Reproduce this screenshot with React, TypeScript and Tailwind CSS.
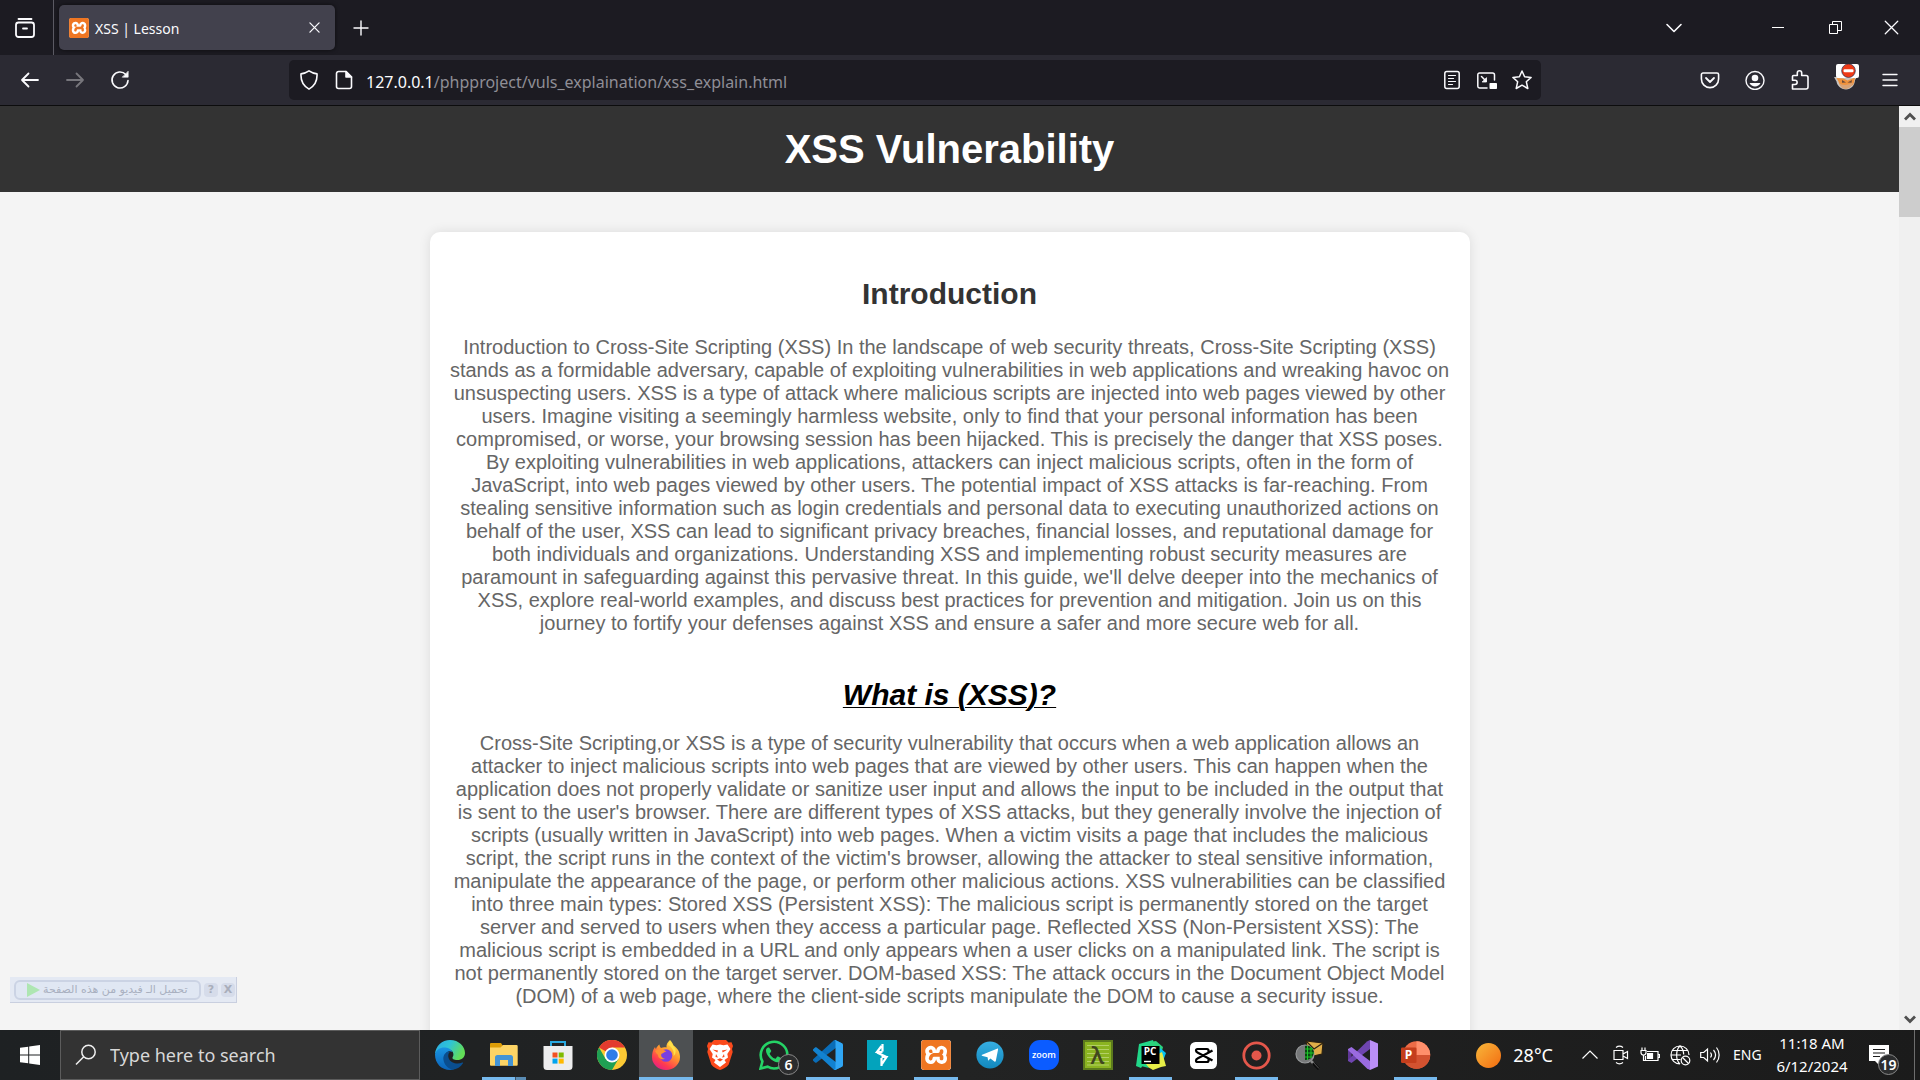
import React from "react";
import { SiXampp } from "react-icons/si";

/* ---------- Browser chrome icons ---------- */

const line = { fill: "none", stroke: "#fbfbfe", strokeWidth: 1.6, strokeLinecap: "round", strokeLinejoin: "round" } as const;

const FirefoxView = () => (
  <svg width="20" height="20" viewBox="0 0 20 20" {...line} strokeWidth={1.8}>
    <path d="M3.500 1h13" />
    <rect x="1" y="4.500" width="18" height="14.500" rx="2.500" />
    <path d="M8 10.500h4" />
  </svg>
);
const Close = ({ size = 11, w = 1.4 }: { size?: number; w?: number }) => (
  <svg width={size} height={size} viewBox="0 0 12 12" {...line} strokeWidth={w}>
    <path d="M1 1l10 10M11 1L1 11" />
  </svg>
);
const Plus = () => (
  <svg width="16" height="16" viewBox="0 0 16 16" {...line} strokeWidth={1.4}>
    <path d="M8 1v14M1 8h14" />
  </svg>
);
const Arrow = ({ forward = false }: { forward?: boolean }) => (
  <svg width="20" height="20" viewBox="0 0 20 20" {...line} stroke={forward ? "#77767c" : "#fbfbfe"} strokeWidth={1.8}>
    {forward ? <path d="M2 10h16M11.500 3.500L18 10l-6.500 6.500" /> : <path d="M18 10H2M8.500 3.500L2 10l6.500 6.500" />}
  </svg>
);
const Reload = () => (
  <svg width="20" height="20" viewBox="0 0 20 20" {...line}>
    <path d="M18 10.500A8 8 0 1 1 15.800 4.500" />
    <path d="M18.200 1.500v5.700h-5.700z" fill="#fbfbfe" strokeWidth={0.6} />
  </svg>
);
const Shield = () => (
  <svg width="20" height="20" viewBox="0 0 20 20" {...line}>
    <path d="M10 .9c2.400 1.700 5 2.600 8 3 .4 6.600-1.700 11.800-8 15.200C3.700 15.700 1.600 10.500 2 3.900c3-.4 5.600-1.300 8-3z" />
  </svg>
);
const PageIcon = () => (
  <svg width="20" height="20" viewBox="0 0 20 20" {...line}>
    <path d="M4.500 1.500H12l5.500 5.500v9.500a2 2 0 0 1-2 2h-11a2 2 0 0 1-2-2v-13a2 2 0 0 1 2-2z" />
    <path d="M12 1.500V7h5.500z" fill="#fbfbfe" />
  </svg>
);
const Reader = () => (
  <svg width="20" height="20" viewBox="0 0 20 20" {...line} strokeWidth={1.5}>
    <rect x="2.800" y="1.500" width="14.400" height="17" rx="2" />
    <path d="M6.500 5.500h7M6.500 8.500h5M6.500 11.500h7M6.500 14.500h4" strokeWidth={1.2} />
  </svg>
);
const Pip = () => (
  <svg width="20" height="20" viewBox="0 0 20 20" {...line} strokeWidth={1.5}>
    <path d="M17.500 10V5a2 2 0 0 0-2-2h-13a1.700 1.700 0 0 0-1.700 1.700v11.600A1.700 1.700 0 0 0 2.500 18H10" />
    <path d="M4.500 6.500L9 11" />
    <path d="M9.500 8v4h-4z" fill="#fbfbfe" strokeWidth={0.8} />
    <rect x="12.500" y="13" width="7.500" height="6" rx=".8" fill="#fff" stroke="none" />
  </svg>
);
const Star = () => (
  <svg width="20" height="20" viewBox="0 0 20 20" {...line} strokeWidth={1.5}>
    <path d="M10 1l2.600 5.700 6.500.7-4.800 4.300 1.500 6.800L10 15.200l-5.800 3.300 1.500-6.800L.9 7.400l6.500-.7z" />
  </svg>
);
const Pocket = () => (
  <svg width="20" height="20" viewBox="0 0 20 20" {...line}>
    <path d="M3 3h14a1.600 1.600 0 0 1 1.600 1.600V9a8.600 8.600 0 0 1-17.200 0V4.600A1.600 1.600 0 0 1 3 3z" />
    <path d="M6 8l4 4 4-4" strokeWidth={1.8} />
  </svg>
);
const Account = () => (
  <svg width="20" height="20" viewBox="0 0 20 20" {...line} strokeWidth={1.4}>
    <circle cx="10" cy="10.500" r="9" />
    <circle cx="10" cy="8" r="3.300" fill="#fbfbfe" stroke="none" />
    <path d="M4.500 13h11c-1 2.300-3.200 3.500-5.500 3.500S5.500 15.300 4.500 13z" fill="#fbfbfe" stroke="none" />
  </svg>
);
const Extension = () => (
  <svg width="20" height="20" viewBox="0 0 20 20" {...line}>
    <path d="M3.500 5.500h3.800V3a2.200 2.200 0 0 1 4.400 0v2.500H16a2 2 0 0 1 2 2V17a2 2 0 0 1-2 2H2.500v-4.500H5a2 2 0 0 0 0-4.300H2.500V6.500a1 1 0 0 1 1-1z" />
  </svg>
);
const FoxExtension = () => (
  <svg width="26" height="26" viewBox="0 0 26 26">
    <path d="M0 13h23l-2 3c0 5-4 9.500-9 9.500S3 21.500 2.500 17.500z" fill="#c9c4bf" />
    <path d="M2.500 14l7 .5 4 2 7.500-3-1 5c-1 3.500-4 4.500-8 4.500-4.500 0-7-2.500-7.500-5.500z" fill="#f0923d" />
    <path d="M5 19.500c4 2 9 2 14-1-1 4-4 6.500-7.500 6.500-3 0-5.500-2-6.500-5.500z" fill="#d9a377" />
    <path d="M8 16l4 2.500-4 .3zM18 16l-4.500 2.500 4 .3z" fill="#6b4a3a" />
    <rect x="2" y="0" width="23" height="14" rx="2" fill="#fff" />
    <circle cx="14.500" cy="6.700" r="6.800" fill="#ee3a17" stroke="#20264a" strokeWidth=".7" />
    <rect x="9.500" y="5.300" width="10" height="3" rx="1.300" fill="#fff" />
  </svg>
);
const Menu = () => (
  <svg width="20" height="20" viewBox="0 0 20 20" {...line} strokeWidth={1.4}>
    <path d="M3 4.500h14M3 10h14M3 15.500h14" />
  </svg>
);
const XamppIcon = ({ size }: { size: number }) => (
  <span className="grid place-items-center rounded-[3px] bg-white text-[#ef7622]">
    <SiXampp size={size} />
  </span>
);

/* ---------- Taskbar icons ---------- */

const Edge = () => (
  <svg width="30" height="30" viewBox="0 0 30 30">
    <defs>
      <linearGradient id="ed1" x1="0" y1="0" x2="1" y2=".4">
        <stop offset="0" stopColor="#2aa9e6" />
        <stop offset=".5" stopColor="#2fc4d6" />
        <stop offset="1" stopColor="#62dd57" />
      </linearGradient>
      <linearGradient id="ed2" x1="0" y1="0" x2="0" y2="1">
        <stop offset="0" stopColor="#1a94e2" />
        <stop offset="1" stopColor="#0b63b8" />
      </linearGradient>
    </defs>
    <path d="M0 14C.6 6 7 0 15 0c9 0 15 6.500 15 13 0 4.500-3.500 7-7.500 7-4 0-5.500-1.600-5-2.600 1.500-1.800 1.200-5-.7-6.600C12.500 7.400 4 8 0 14z" fill="url(#ed1)" />
    <path d="M0 14.500C1 9.500 6 7 10.500 7.600c3.500.4 6 2 7 4.400-4-2-7.500.5-7.500 5 0 6 5 10.500 11 11-1.800 1.300-4 2-6 2C6.500 30 0 23.500 0 14.500z" fill="url(#ed2)" />
    <path d="M12.500 11.700c-3 1.500-4.700 4.500-4 8.300.8 4.500 4 8.500 9 9.700 4.500-.5 8.300-3 10.500-6.500.4-.7-.2-1-.7-.7-5 2.500-11.500.5-13.500-4-1-2.500-.7-5 1-6.500-.7-.5-1.500-.6-2.300-.3z" fill="#0a4e8f" />
  </svg>
);
const Explorer = () => (
  <svg width="30" height="30" viewBox="0 0 30 30">
    <path d="M1 4a1 1 0 0 1 1-1h10l2 3v4H1z" fill="#dd9d07" />
    <path d="M1 7.500h10.500L14 5h13.500a1.200 1.200 0 0 1 1.200 1.200v18.600a1 1 0 0 1-1 1H2a1 1 0 0 1-1-1z" fill="#fdd465" />
    <path d="M6 26V17.500A2.500 2.500 0 0 1 8.500 15h13a2.500 2.500 0 0 1 2.500 2.500V26h-5v-6h-8v6z" fill="#4494d5" />
  </svg>
);
const Store = () => (
  <svg width="30" height="30" viewBox="0 0 30 30">
    <path d="M8 7V2h14v5" fill="none" stroke="#29a8e0" strokeWidth="2" />
    <path d="M.5 6h29v20.500a3.500 3.500 0 0 1-3.500 3.500H4A3.500 3.500 0 0 1 .5 26.500z" fill="#ededee" />
    <path d="M9.500 12.500h5v5h-5z" fill="#f25022" />
    <path d="M15.700 12.500h5v5h-5z" fill="#7fba00" />
    <path d="M9.500 18.600h5v5h-5z" fill="#00a4ef" />
    <path d="M15.700 18.600h5v5h-5z" fill="#ffb900" />
  </svg>
);
const Chrome = () => (
  <svg width="30" height="30" viewBox="0 0 30 30">
    <circle cx="15" cy="15" r="15" fill="#fcc934" />
    <path d="M15 15L2 7.500A15 15 0 0 1 28 7.500H15z" fill="#e33b2e" />
    <path d="M2 7.500A15 15 0 0 0 15 30l6.500-11.200L15 15 8.500 18.700z" fill="#1fa053" />
    <circle cx="15" cy="15" r="7.500" fill="#fff" />
    <circle cx="15" cy="15" r="5.800" fill="#2f7de9" />
  </svg>
);
const Firefox = () => (
  <svg width="30" height="30" viewBox="0 0 30 30">
    <defs>
      <linearGradient id="ff1" x1=".8" y1="0" x2=".2" y2="1">
        <stop offset="0" stopColor="#fff04a" />
        <stop offset=".4" stopColor="#ff9a2e" />
        <stop offset=".75" stopColor="#ff3b4f" />
        <stop offset="1" stopColor="#e01b8c" />
      </linearGradient>
    </defs>
    <path d="M19 0c2 2 3 4 3.500 5.500C26.500 8 29 12 29 17a14 13 0 0 1-28 0c0-3.500.8-7 3-10 .2 1 .5 1.500 1 2 .6-2 2-3.500 3.500-4.500 0 1.500.5 2.500 1.500 3.500 2-1 4-1 5.500-.5C15 5 16.500 2 19 0z" fill="url(#ff1)" />
    <circle cx="15" cy="15.500" r="6.300" fill="#7b3fe0" />
    <path d="M4 11c3-2.500 7-2.500 11.500.5-2 .3-3 1.500-5 2.300-1 1.500 0 4.500 3.500 5-3 1.500-7-.3-7-4-1-.5-2-2-3-3.800z" fill="#ff9232" />
    <path d="M17 5c4 2 6.500 6 5.500 11 2-1.500 2.500-4 2-6.500-1-3-3.500-5-5.500-8-1 1-1.700 2.200-2 3.500z" fill="#ffe04a" />
  </svg>
);
const Brave = () => (
  <svg width="26" height="30" viewBox="0 0 26 30">
    <path d="M7 0h12l2.500 2.500 3-.3L26 6l-1 3 .7 3-4 12.500c-2 3-6 4.500-8.700 5.500-2.700-1-6.700-2.500-8.700-5.500L.3 12 1 9 0 6l1.500-3.800 3 .3z" fill="#fb4a1c" />
    <path d="M5.500 4.500l4 .8L13 4.500l3.500.8 4-.8L23.500 9l-3.200 5 .7 3.500-3.500 2.500 1.500 2.500L13 27l-6-4.500L8.500 20 5 17.500l.7-3.500L2.500 9z" fill="#fff" />
    <path d="M5.500 9.500l5.500 1-.7 2zM20.500 9.500l-5.500 1 .7 2zM9 14l2 3.500-2.500-.5zM17 14l-2 3.500 2.500-.5zM10 19.500l3-1.200 3 1.200-3 2z" fill="#fb4a1c" />
  </svg>
);
const Badge = ({ children, className }: { children: React.ReactNode; className: string }) => (
  <span className={`absolute grid size-[21px] place-items-center rounded-full border border-[#8a8a8a] bg-[#2c2d2e] text-sm leading-none font-semibold text-white ${className}`}>
    {children}
  </span>
);
const Whatsapp = () => (
  <span className="relative block">
    <svg width="30" height="30" viewBox="0 0 30 30">
      <path d="M1.500 28.500l1.900-7A13.300 13.300 0 1 1 8.600 26.700z" fill="none" stroke="#25d366" strokeWidth="2.600" />
      <path d="M10.600 8.200c-.4-.8-.8-.8-1.300-.8-1 0-2.600 1.200-2.300 3.700.5 4.300 5.700 10.300 11 11.200 2.500.4 4.300-1 4.600-3.200.1-.7 0-.9-.5-1.200l-2.900-1.400c-.5-.2-.8-.1-1.100.3l-1.300 1.600c-.3.3-.6.400-1 .2-2-.9-3.900-2.600-5-4.700-.2-.4-.1-.7.2-1l1-1.200c.3-.4.300-.7.100-1.100z" fill="#25d366" />
    </svg>
    <Badge className="-right-[10px] -bottom-[5px]">6</Badge>
  </span>
);
const VsCode = () => (
  <svg width="30" height="30" viewBox="0 0 100 100">
    <path d="M96.460 10.800L75.860.880C73.470-.270 70.600.210 68.750 2.080L1.300 63.580c-1.800 1.620-1.800 4.520 0 6.220l5.500 5c1.500 1.300 3.700 1.400 5.300.2L93.360 13.370C96.100 11.300 100 13.200 100 16.600c0-2.600-1.400-4.800-3.540-5.800z" fill="#0a6db8" />
    <path d="M96.460 89.200l-20.600 9.920c-2.390 1.150-5.260.67-7.110-1.200L1.300 36.420c-1.800-1.620-1.800-4.520 0-6.220l5.500-5c1.500-1.300 3.700-1.400 5.300-.2l81.260 61.630C96.100 88.700 100 86.800 100 83.400c0 2.600-1.400 4.800-3.540 5.800z" fill="#1282d0" />
    <path d="M75.860 99.130c-2.390 1.140-5.260.660-7.110-1.210C71.060 100.200 75 98.600 75 95.300V4.700c0-3.300-3.940-4.900-6.250-2.620C70.600.200 73.470-.270 75.860.870l20.590 9.900C98.600 11.800 100 14 100 16.400v67.200c0 2.400-1.400 4.600-3.550 5.600z" fill="#30a6f4" />
  </svg>
);
const Burp = () => (
  <svg width="30" height="30" viewBox="0 0 30 30">
    <path d="M0 0h30v30H0z" fill="#03a3bc" />
    <path d="M15.500 4v7.500M15.500 12H10l4.500-6M10 12.500l9.500 4.500M14.500 17h5L15 24M14.500 18v8" fill="none" stroke="#fff" strokeWidth="2.200" />
  </svg>
);
const Telegram = () => (
  <svg width="28" height="28" viewBox="0 0 28 28">
    <defs>
      <linearGradient id="tg" x1="0" y1="0" x2="0" y2="1">
        <stop offset="0" stopColor="#36aee2" />
        <stop offset="1" stopColor="#1288bd" />
      </linearGradient>
    </defs>
    <circle cx="14" cy="14" r="13.600" fill="url(#tg)" />
    <path d="M5.500 14L21 7.700c.7-.3 1.200.2 1 1.100L19.800 20c-.2.800-.8 1-1.400.6l-4-3-2.300 2.200-.5-3.600-5-1.200c-.8-.3-.8-.7-1.100-1z" fill="#fff" />
  </svg>
);
const Zoom = () => (
  <span className="grid size-[30px] place-items-center rounded-[11px] bg-[#0b5cff]">
    <span className="pb-0.5 font-['Open_Sans'] text-[9px] leading-none font-semibold text-white">zoom</span>
  </span>
);
const Lambda = () => (
  <span className="relative grid size-[30px] place-items-center border-2 border-[#5c7a1d] bg-[#8bb421]">
    <svg width="26" height="26" viewBox="0 0 26 26" className="absolute inset-0">
      <path d="M2 3.500h22M2 7.500h22M2 11.500h22M2 15.500h22M2 19.500h22M2 23h22" stroke="#b3d066" strokeWidth="1" />
    </svg>
    <span className="relative font-['Open_Sans'] text-2xl leading-6 font-semibold text-[#40461f]">λ</span>
  </span>
);
const PyCharm = () => (
  <span className="relative grid size-[30px] place-items-center">
    <svg width="30" height="30" viewBox="0 0 30 30" className="absolute inset-0">
      <path d="M3 4L17 0l2 8L5 28l-5-2z" fill="#21d789" />
      <path d="M14 2l6-1 7 6-2 8H12z" fill="#2bd37c" />
      <path d="M24 8l6 5-3 8-5-5z" fill="#07c3f2" />
      <path d="M5 23L26 12l4 14-5 1-8 3z" fill="#e6ee47" />
      <path d="M1 25l6-5 6 8z" fill="#21d789" />
      <path d="M5.500 6h18v18h-18z" fill="#000" />
      <path d="M8 21.500h7" stroke="#fff" strokeWidth="1.400" />
    </svg>
    <span className="relative pr-px pb-2 font-['Open_Sans'] text-[10px] leading-none font-bold text-white">PC</span>
  </span>
);
const CapCut = () => (
  <svg width="27" height="27" viewBox="0 0 27 27">
    <rect width="27" height="27" rx="5.500" fill="#fff" />
    <path d="M22.500 8.500L7.500 16.500c-1 .5-1.500 1-1.500 2s.6 1.500 1.500 1.500H17c1 0 1.500-.7 1.500-1.500V17M22.500 18.500L7.500 10.500C6.500 10 6 9.500 6 8.500S6.600 7 7.500 7H17c1 0 1.500.7 1.500 1.500V10" fill="none" stroke="#000" strokeWidth="2.200" />
  </svg>
);
const Recorder = () => (
  <svg width="29" height="29" viewBox="0 0 29 29">
    <circle cx="14.500" cy="14.500" r="12.700" fill="none" stroke="#e4574b" strokeWidth="2.800" />
    <circle cx="14.500" cy="14.500" r="5" fill="#e4574b" />
  </svg>
);
const MailSearch = () => (
  <svg width="30" height="30" viewBox="0 0 30 30">
    <path d="M11 1l17 2-1 11-13 3z" fill="#e0ae49" stroke="#2b2112" strokeWidth="1.200" />
    <path d="M11 1l8 8 9-6" fill="none" stroke="#2b2112" strokeWidth="1.200" />
    <circle cx="10" cy="14" r="9" fill="#77797a" stroke="#97999a" strokeWidth="1.200" />
    <path d="M10 6c5-1 8 2 9 6-.5 5-4 8-9 8z" fill="#0b4511" />
    <path d="M12.500 6v14M16 7v11M10 9h8M10 13h9M10 17h7" stroke="#1fc62a" strokeWidth="1" />
    <path d="M16 21l3 3" stroke="#8a8a8a" strokeWidth="2.500" />
    <path d="M18 23l6 6" stroke="#0b0b0b" strokeWidth="3" />
    <path d="M18 22l6 6.500" stroke="#6a6a6a" strokeWidth=".8" />
  </svg>
);
const VisualStudio = () => (
  <svg width="30" height="30" viewBox="0 0 30 30">
    <path d="M0 9l3.500 3v6L0 21z" fill="#5f3796" />
    <path d="M3.500 23L0 21v-1L19 1.500 22 0v9z" fill="#6f45b0" />
    <path d="M3.500 7L0 9v1l19 18.500 3 1.500v-9z" fill="#9a6be0" />
    <path d="M22 0l8 3.500v23L22 30z" fill="#bb8ff7" />
  </svg>
);
const PowerPoint = () => (
  <span className="relative block">
    <svg width="30" height="30" viewBox="0 0 30 30">
      <circle cx="15.500" cy="15" r="13.700" fill="#ed6c47" />
      <path d="M15.500 1.300A13.700 13.700 0 0 1 29.200 15H15.500z" fill="#ff8f6b" />
      <path d="M1.800 15h27.400a13.700 13.700 0 0 1-27.400 0z" fill="#d35230" />
      <rect x="0" y="7.500" width="15.500" height="15.500" rx="1.300" fill="#c43e1c" />
    </svg>
    <span className="absolute top-[7px] left-0 grid size-4 place-items-center font-['Open_Sans'] text-xs leading-none font-bold text-white">P</span>
  </span>
);

type Task = { name: string; icon: React.ReactNode; state?: "open" | "active" | "stacked" };

const pinned: Task[] = [
  { name: "Edge", icon: <Edge /> },
  { name: "File Explorer", icon: <Explorer />, state: "stacked" },
  { name: "Store", icon: <Store /> },
  { name: "Chrome", icon: <Chrome /> },
  { name: "Firefox", icon: <Firefox />, state: "active" },
  { name: "Brave", icon: <Brave /> },
  { name: "WhatsApp", icon: <Whatsapp /> },
  { name: "Visual Studio Code", icon: <VsCode />, state: "open" },
  { name: "Burp Suite", icon: <Burp /> },
  { name: "XAMPP", icon: <XamppIcon size={30} />, state: "open" },
  { name: "Telegram", icon: <Telegram /> },
  { name: "Zoom", icon: <Zoom /> },
];
const running: Task[] = [
  { name: "Lambda", icon: <Lambda /> },
  { name: "PyCharm", icon: <PyCharm />, state: "open" },
  { name: "CapCut", icon: <CapCut /> },
  { name: "Recorder", icon: <Recorder />, state: "open" },
  { name: "Mail Search", icon: <MailSearch /> },
  { name: "Visual Studio", icon: <VisualStudio /> },
  { name: "PowerPoint", icon: <PowerPoint />, state: "open" },
];

const TaskButton = ({ task, wide }: { task: Task; wide: boolean }) => (
  <button
    aria-label={task.name}
    className={`relative grid h-full shrink-0 place-items-center ${wide ? "w-[54px]" : "w-[53px]"} ${task.state === "active" ? "bg-[#4d5052]" : ""}`}
  >
    {task.icon}
    {task.state === "active" && <span className="absolute inset-x-0 bottom-0 h-[3px] bg-[#76b9ed]" />}
    {task.state === "open" && <span className="absolute inset-x-[5px] bottom-0 h-[3px] bg-[#76b9ed]" />}
    {task.state === "stacked" && (
      <span className="absolute inset-x-[5px] bottom-0 flex h-[3px]">
        <span className="flex-1 bg-[#76b9ed]" />
        <span className="w-[11px] border-l border-[#3d5266] bg-[#5a8cb4]" />
      </span>
    )}
  </button>
);

const ToolButton = ({ label, children, narrow = false }: { label: string; children: React.ReactNode; narrow?: boolean }) => (
  <button aria-label={label} className={`grid h-10 shrink-0 place-items-center ${narrow ? "w-[35px]" : "w-[45px]"}`}>
    {children}
  </button>
);

const Chevron = ({ up = false }: { up?: boolean }) => (
  <svg width="12" height="9" viewBox="0 0 12 9">
    <path d={up ? "M1 7.500L6 2.500l5 5" : "M1 1.500l5 5 5-5"} fill="none" stroke="#505050" strokeWidth="2.800" />
  </svg>
);

/* ---------- Sections ---------- */

const TabStrip = () => (
  <div className="flex h-[55px] shrink-0 items-center bg-[#1c1b22]">
    <button aria-label="Firefox View" className="grid h-full w-[54px] place-items-center border-r border-[#5b5a63] pr-[3px]">
      <FirefoxView />
    </button>
    <div className="ml-[5px] flex h-[45px] w-[276px] items-center rounded-[5px] bg-[#42414d] pr-[11px] pl-2.5 shadow-[0_0_4px_rgba(0,0,0,0.6)]">
      <XamppIcon size={20} />
      <span className="ml-1.5 flex-1 pt-0.5 text-sm text-[#fbfbfe]">XSS | Lesson</span>
      <button aria-label="Close tab" className="grid size-5 place-items-center">
        <Close />
      </button>
    </div>
    <button aria-label="New tab" className="ml-4 grid size-5 place-items-center">
      <Plus />
    </button>
    <div className="flex-1" />
    <button aria-label="List all tabs" className="grid w-[46px] place-items-center">
      <svg width="18" height="10" viewBox="0 0 18 10" {...line}>
        <path d="M2 1.500l7 7 7-7" />
      </svg>
    </button>
    <div className="ml-[52px] flex">
      <button aria-label="Minimize" className="grid h-[55px] w-[58px] place-items-center">
        <span className="h-px w-3 bg-white" />
      </button>
      <button aria-label="Restore" className="grid h-[55px] w-[56px] place-items-center">
        <svg width="13" height="13" viewBox="0 0 13 13" fill="none" stroke="#fff">
          <path d="M.5 3.500h8v9h-8zM3.500 3.500v-3h9v9h-4" />
        </svg>
      </button>
      <button aria-label="Close" className="grid h-[55px] w-[57px] place-items-center">
        <Close size={15} w={1} />
      </button>
    </div>
  </div>
);

const Toolbar = () => (
  <div className="flex h-[51px] shrink-0 items-center border-b border-[#0c0c0d] bg-[#2b2a33] pr-2 pl-[7px]">
    <ToolButton label="Back"><Arrow /></ToolButton>
    <ToolButton label="Forward"><Arrow forward /></ToolButton>
    <ToolButton label="Reload"><Reload /></ToolButton>
    <div className="mr-[146px] ml-[147px] flex h-10 flex-1 items-center rounded-[5px] bg-[#1c1b22] px-0.5">
      <ToolButton label="Tracking protection" narrow><Shield /></ToolButton>
      <ToolButton label="Site information" narrow><PageIcon /></ToolButton>
      <span className="ml-[5px] flex-1 pt-[3px] text-base text-[#8f8e96]">
        <span className="text-[#fbfbfe]">127.0.0.1</span>/phpproject/vuls_explaination/xss_explain.html
      </span>
      <ToolButton label="Reader view" narrow><Reader /></ToolButton>
      <ToolButton label="Picture in picture" narrow><Pip /></ToolButton>
      <ToolButton label="Bookmark" narrow><Star /></ToolButton>
    </div>
    <ToolButton label="Pocket"><Pocket /></ToolButton>
    <ToolButton label="Account"><Account /></ToolButton>
    <ToolButton label="Extensions"><Extension /></ToolButton>
    <ToolButton label="Wallet"><span className="pb-[7px] pl-1"><FoxExtension /></span></ToolButton>
    <ToolButton label="Menu"><Menu /></ToolButton>
  </div>
);

const DownloadBar = () => (
  <div className="absolute bottom-[27px] left-2.5 flex h-[26px] items-center border-r border-b border-[#c9cfdf] bg-[#e4e9f3] pr-px pl-1 font-['DejaVu_Sans']">
    <button className="flex h-5 w-[187px] items-center rounded-md border-2 border-[#cbd3e4] bg-[#e0e7f3] pl-2.5">
      <svg width="15" height="14" viewBox="0 0 15 14" className="shrink-0">
        <path d="M1 0l13 7-13 7z" fill="#aee6b2" />
      </svg>
      <span dir="rtl" className="ml-0.5 text-[11px] leading-4 whitespace-nowrap text-[#a9b0c0]">تحميل الـ فيديو من هذه الصفحة</span>
    </button>
    <button className="ml-[3px] size-3.5 rounded bg-[#d6dcea] text-[11px] leading-none font-bold text-[#a9aebb]">?</button>
    <button className="ml-[3px] size-3.5 rounded bg-[#d6dcea] text-[11px] leading-none font-bold text-[#a9aebb]">X</button>
  </div>
);

const Page = () => (
  <div className="relative flex min-h-0 flex-1 bg-[#f4f4f4]">
    <main className="min-w-0 flex-1 overflow-hidden text-center font-['Liberation_Sans',Arial,sans-serif]">
      <header className="bg-[#333] py-5">
        <h1 className="text-[40px] leading-[46px] font-bold text-white">XSS Vulnerability</h1>
      </header>
      <article className="mx-auto mt-10 max-w-[1040px] rounded-[10px] bg-white px-5 py-[45px] shadow-[0_0_12px_rgba(0,0,0,0.1)]">
        <h2 className="text-3xl leading-[34px] font-bold text-[#333]">Introduction</h2>
        <p className="mt-[25px] text-xl leading-[23px] text-[#666]">
          Introduction to Cross-Site Scripting (XSS) In the landscape of web security threats, Cross-Site Scripting (XSS)
          stands as a formidable adversary, capable of exploiting vulnerabilities in web applications and wreaking havoc on
          unsuspecting users. XSS is a type of attack where malicious scripts are injected into web pages viewed by other
          users. Imagine visiting a seemingly harmless website, only to find that your personal information has been
          compromised, or worse, your browsing session has been hijacked. This is precisely the danger that XSS poses. By
          exploiting vulnerabilities in web applications, attackers can inject malicious scripts, often in the form of
          JavaScript, into web pages viewed by other users. The potential impact of XSS attacks is far-reaching. From
          stealing sensitive information such as login credentials and personal data to executing unauthorized actions on
          behalf of the user, XSS can lead to significant privacy breaches, financial losses, and reputational damage for
          both individuals and organizations. Understanding XSS and implementing robust security measures are paramount in
          safeguarding against this pervasive threat. In this guide, we'll delve deeper into the mechanics of XSS, explore
          real-world examples, and discuss best practices for prevention and mitigation. Join us on this journey to fortify
          your defenses against XSS and ensure a safer and more secure web for all.
        </p>
        <h2 className="mt-[43px] text-3xl leading-[34px] font-bold text-black italic underline decoration-1 underline-offset-2">What is (XSS)?</h2>
        <p className="mt-5 text-xl leading-[23px] text-[#666]">
          Cross-Site Scripting,or XSS is a type of security vulnerability that occurs when a web application allows an
          attacker to inject malicious scripts into web pages that are viewed by other users. This can happen when the
          application does not properly validate or sanitize user input and allows the input to be included in the output
          that is sent to the user's browser. There are different types of XSS attacks, but they generally involve the
          injection of scripts (usually written in JavaScript) into web pages. When a victim visits a page that includes
          the malicious script, the script runs in the context of the victim's browser, allowing the attacker to steal
          sensitive information, manipulate the appearance of the page, or perform other malicious actions. XSS
          vulnerabilities can be classified into three main types: Stored XSS (Persistent XSS): The malicious script is
          permanently stored on the target server and served to users when they access a particular page. Reflected XSS
          (Non-Persistent XSS): The malicious script is embedded in a URL and only appears when a user clicks on a
          manipulated link. The script is not permanently stored on the target server. DOM-based XSS: The attack occurs in
          the Document Object Model (DOM) of a web page, where the client-side scripts manipulate the DOM to cause a
          security issue.
        </p>
      </article>
    </main>
    <div className="flex w-[21px] shrink-0 flex-col bg-[#f0f0f0]">
      <button aria-label="Scroll up" className="grid h-[21px] place-items-center"><Chevron up /></button>
      <div className="h-[90px] bg-[#cdcdcd]" />
      <div className="flex-1" />
      <button aria-label="Scroll down" className="grid h-[21px] place-items-center"><Chevron /></button>
    </div>
    <DownloadBar />
  </div>
);

const tray = { fill: "none", stroke: "#fff", strokeWidth: 1.2 } as const;

const Taskbar = () => (
  <footer className="flex h-[50px] shrink-0 items-stretch bg-linear-to-r from-[#1e2123] via-[#222323] to-[#1b1b1b] text-white">
    <button aria-label="Start" className="grid w-[60px] place-items-center">
      <svg width="20" height="20" viewBox="0 0 20 20" fill="#fff">
        <path d="M0 2.800L8.200 1.700v7.800H0zM9.200 1.500L20 0v9.500H9.200zM0 10.500h8.200v7.800L0 17.200zM9.200 10.500H20V20L9.200 18.500z" />
      </svg>
    </button>
    <label className="flex w-[360px] items-center border border-[#5c5c5c] bg-[#333]">
      <svg width="22" height="22" viewBox="0 0 22 22" className="ml-3.5" fill="none" stroke="#f0f0f0" strokeWidth="1.500">
        <circle cx="13.500" cy="8" r="6.700" />
        <path d="M8.700 12.800L1 20.500" />
      </svg>
      <input
        aria-label="Search"
        placeholder="Type here to search"
        className="ml-[13px] min-w-0 flex-1 bg-transparent text-lg text-white outline-none placeholder:text-[#d8d8d8]"
      />
    </label>
    <nav className="ml-[3px] flex">
      {pinned.map((t) => <TaskButton key={t.name} task={t} wide />)}
      {running.map((t) => <TaskButton key={t.name} task={t} wide={false} />)}
    </nav>
    <div className="flex-1" />
    <button className="flex items-center text-lg">
      <span className="mr-3 size-[25px] rounded-full bg-linear-to-br from-[#f6b73a] to-[#f26a0c]" />
      28°C
    </button>
    <div className="ml-[29px] flex items-center">
      <svg width="16" height="10" viewBox="0 0 16 10" {...tray}><path d="M.5 8.500L8 1l7.500 7.500" /></svg>
      <svg width="16" height="20" viewBox="0 0 16 20" {...tray} className="ml-[15px]">
        <path d="M1 5.500h9v9H1zM10 9l4.500-2.500v7L10 11M3 2.500c2-1.500 5-1.500 7 0M3 17.500c2 1.500 5 1.500 7 0" />
      </svg>
      <svg width="20" height="16" viewBox="0 0 20 16" {...tray} className="ml-[11px]">
        <path d="M7 4.500h11v9H5.500V9M18.500 7.500h1v3h-1" />
        <path d="M7.500 6.500h5v5h-5z" fill="#fff" />
        <path d="M1 3.500h5v2a2.500 2.500 0 0 1-5 0zM2 3.500v-3M5 3.500v-3M3.500 8v5.500h2" />
      </svg>
      <svg width="21" height="21" viewBox="0 0 21 21" {...tray} className="ml-2.5">
        <path d="M19 10A9 9 0 1 0 10 19M10 1C5.500 5 5.500 15 10 19M10 1c2.500 2 3.500 5 3.700 8.500M1 10h10M2.500 5.500h15M2.500 14.500h8" />
        <circle cx="15.500" cy="15.500" r="4.300" />
        <path d="M12.500 12.500l6 6" />
      </svg>
      <svg width="20" height="18" viewBox="0 0 20 18" {...tray} className="ml-[9px]">
        <path d="M.7 6.500h3L7.500 3v12L3.700 11.500h-3zM10.500 6.500c1.200 1.500 1.200 3.500 0 5M13.500 4c2.500 3 2.500 7 0 10M16.500 1.500c3.500 4.500 3.500 10.500 0 15" />
      </svg>
      <span className="ml-[13px] w-[30px] text-sm">ENG</span>
      <div className="ml-2.5 w-[78px] text-center text-[15px] leading-[23px] whitespace-nowrap">
        <div>11:18 AM</div>
        <div>6/12/2024</div>
      </div>
      <span className="relative ml-[18px] block">
        <svg width="20" height="20" viewBox="0 0 20 20">
          <path d="M0 0h20v16H10v4l-4-4H0z" fill="#fff" />
          <path d="M4 4.500h12M4 8h12M4 11.500h7" stroke="#1b1b1b" strokeWidth="1.200" />
        </svg>
        <Badge className="-right-[10px] -bottom-[10px]">19</Badge>
      </span>
    </div>
    <button aria-label="Show desktop" className="ml-[25px] w-1.5 border-l border-[#6d6d6d]" />
  </footer>
);

export default function App() {
  return (
    <div className="flex h-screen flex-col overflow-hidden font-['Noto_Sans','Open_Sans',sans-serif]">
      <TabStrip />
      <Toolbar />
      <Page />
      <Taskbar />
    </div>
  );
}
